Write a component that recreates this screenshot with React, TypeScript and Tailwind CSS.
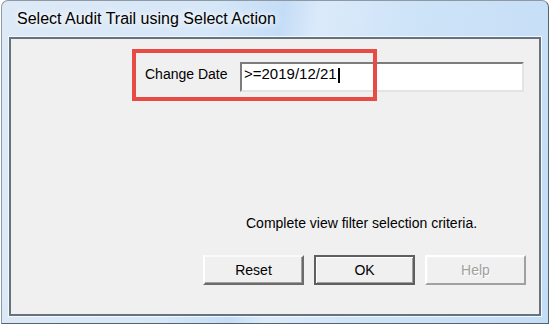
type BtnProps = { label: string; kind?: 'normal' | 'default' | 'disabled' };

function DlgButton({ label, kind = 'normal' }: BtnProps) {
  const frame =
    kind === 'default'
      ? 'border-2 border-[#5f5f5f] shadow-[inset_1px_1px_0_#ffffff,inset_-1px_-1px_0_#a0a0a0]'
      : kind === 'disabled'
        ? 'border-2 border-t-white border-l-white border-b-[#a0a0a0] border-r-[#a0a0a0] shadow-[inset_1px_1px_0_#f4f4f4]'
        : 'border-2 border-t-[#fafafa] border-l-white border-b-[#6b6b6b] border-r-[#6b6b6b] shadow-[inset_-1px_-1px_0_#a0a0a0]';
  const text =
    kind === 'disabled' ? 'text-[#a0a0a0] [text-shadow:1px_1px_0_#ffffff]' : 'text-black';
  return (
    <button
      disabled={kind === 'disabled'}
      className={`w-[101px] h-[30px] bg-[#f0f0f0] flex items-center justify-center text-[14px] leading-[16px] ${frame} ${text}`}
    >
      {label}
    </button>
  );
}

export default function App() {
  return (
    <div className="w-[550px] h-[325px] bg-white overflow-hidden font-['Liberation_Sans',Arial,sans-serif]">
      {/* window frame */}
      <div className="ml-px w-[548px] h-[324px] flex flex-col rounded-t-[7px] border border-[#56626e] border-l-[#8d99a5] border-t-[#8d99a5] bg-[linear-gradient(100deg,#dde9f6_0%,#d6e7f8_35%,#c4ddf6_47%,#dbeafa_53%,#cde3f8_70%,#c4ddf6_100%)] px-[7px] pb-[7px]">
        {/* title bar */}
        <div className="h-[36px] shrink-0 pl-[8px] pt-[9px] text-[16px] leading-[18px] text-black [text-shadow:0_0_6px_#ffffff,0_0_10px_#ffffff]">
          Select Audit Trail using Select Action
        </div>

        {/* client area */}
        <div className="relative flex-1 flex flex-col bg-[#f0f0f0] border-2 border-[#66727e] shadow-[0_0_0_1px_#f3f8fd]">
          {/* filter row */}
          <div className="flex items-start mt-[23px] pl-[134px]">
            <div className="w-[95px] mt-[4px] text-[14px] leading-[16px] text-black">Change Date</div>
            <div className="w-[284px] h-[30px] bg-white border-2 border-t-[#7c7c7c] border-l-[#7c7c7c] border-b-[#e3e3e3] border-r-[#e3e3e3] flex items-start pl-[2px] pt-[1px]">
              <span className="text-[15px] leading-[17px] text-black">&gt;=2019/12/21</span>
              <span className="ml-px mt-[3px] w-[2px] h-[15px] bg-black" />
            </div>
          </div>

          <div className="mt-[123px] pl-[235px] text-[14px] leading-[16px] text-black">
            Complete view filter selection criteria.
          </div>

          <div className="mt-[24px] pl-[192px] flex gap-[10px]">
            <DlgButton label="Reset" />
            <DlgButton label="OK" kind="default" />
            <DlgButton label="Help" kind="disabled" />
          </div>

          {/* red highlight annotation */}
          <div className="absolute left-[121px] top-[10px] w-[245px] h-[52px] border-4 border-[#e84a44]" />
        </div>
      </div>
    </div>
  );
}
